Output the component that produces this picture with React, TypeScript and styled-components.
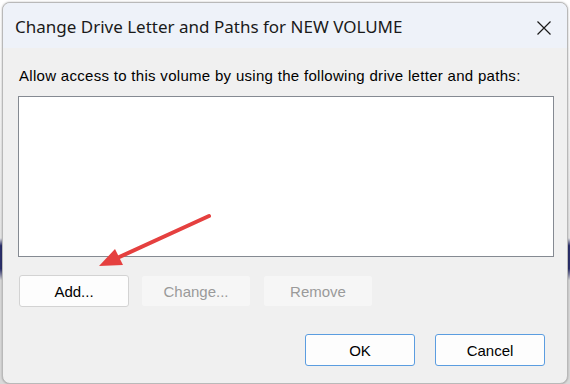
import styled, { createGlobalStyle } from "styled-components";

const GlobalStyle = createGlobalStyle`
    html, body {
        margin: 0;
        padding: 0;
        background: #c8ccd4;
    }
    #root {
        width: 570px;
        height: 384px;
        overflow: hidden;
    }
`

const Backdrop = styled.div`
    display: flex;
    width: 570px;
    height: 384px;
    padding: 2px 2px 0 2px;
    box-sizing: border-box;
    background: linear-gradient(180deg, #ffffff 0%, #e6e6e6 62%, #2b2f6b 64%, #2b2f6b 70%, #d9d9d9 73%);
`

const Window = styled.div`
    position: relative;
    display: flex;
    flex-direction: column;
    flex: 1;
    border-radius: 8px;
    border: 1px solid #b9b9b9;
    background: #f0f0f0;
    overflow: hidden;
    box-shadow: 0 0 2px rgba(0, 0, 0, 0.3);
`

const TitleBar = styled.div`
    display: flex;
    align-items: center;
    justify-content: space-between;
    height: 45px;
    padding: 0 0 0 12px;
    background: #eef2f9;
`

const Title = styled.span`
    font-family: "Noto Sans", sans-serif;
    font-size: 17px;
    color: #1a1a1a;
    margin-top: 2px;
`

const CloseBtn = styled.div`
    display: flex;
    justify-content: center;
    align-items: center;
    width: 46px;
    height: 45px;
    margin-top: 4px;
`

const Body = styled.div`
    display: flex;
    flex-direction: column;
    padding: 19px 13px 0 15px;
    font-family: "Liberation Sans", Arial, sans-serif;
`

const Label = styled.div`
    font-size: 15px;
    letter-spacing: 0.3px;
    color: #000;
    line-height: 17px;
    padding-left: 1px;
`

const ListBox = styled.div`
    height: 159px;
    margin-top: 12px;
    background: #ffffff;
    border: 1px solid #858a92;
`

const ButtonRow = styled.div<{ $justify?: string; $top: number }>`
    display: flex;
    justify-content: ${(p) => p.$justify ?? "flex-start"};
    gap: ${(p) => (p.$justify ? 20 : 12)}px;
    margin-top: ${(p) => p.$top}px;
    padding: 0 ${(p) => (p.$justify ? 9 : 0)}px 0 ${(p) => (p.$justify ? 0 : 1)}px;
`

const Button = styled.div<{ $variant?: "default" | "disabled" | "primary" }>`
    display: flex;
    justify-content: center;
    align-items: center;
    width: 110px;
    height: 32px;
    box-sizing: border-box;
    border-radius: 3px;
    font-size: 15px;
    color: ${(p) => (p.$variant === "disabled" ? "#9a9a9a" : "#000")};
    background: ${(p) => (p.$variant === "disabled" ? "#f6f6f6" : "#fdfdfd")};
    border: 1px solid
        ${(p) =>
            p.$variant === "disabled" ? "#f0f0f0" : p.$variant === "primary" ? "#5b9de0" : "#d3d3d3"};
`

const Arrow = styled.svg`
    position: absolute;
    left: 0;
    top: 0;
    pointer-events: none;
`

function App() {
    return (
        <>
            <GlobalStyle />
            <Backdrop>
                <Window>
                    <TitleBar>
                        <Title>Change Drive Letter and Paths for NEW VOLUME</Title>
                        <CloseBtn>
                            <svg width="16" height="16" viewBox="0 0 16 16">
                                <path d="M1.5 1.5 L14.5 14.5 M14.5 1.5 L1.5 14.5" stroke="#1a1a1a" strokeWidth="1.2" />
                            </svg>
                        </CloseBtn>
                    </TitleBar>
                    <Body>
                        <Label>Allow access to this volume by using the following drive letter and paths:</Label>
                        <ListBox />
                        <ButtonRow $top={18}>
                            <Button>Add...</Button>
                            <Button $variant="disabled">Change...</Button>
                            <Button $variant="disabled">Remove</Button>
                        </ButtonRow>
                        <ButtonRow $top={27} $justify="flex-end">
                            <Button $variant="primary">OK</Button>
                            <Button $variant="primary">Cancel</Button>
                        </ButtonRow>
                    </Body>
                    <Arrow width="566" height="382" viewBox="0 0 566 382">
                        <line x1="206" y1="213" x2="112" y2="256" stroke="#e5403f" strokeWidth="4" strokeLinecap="round" />
                        <polygon points="96,263 112,246 120,262" fill="#e5403f" />
                    </Arrow>
                </Window>
            </Backdrop>
        </>
    );
}

export default App;
